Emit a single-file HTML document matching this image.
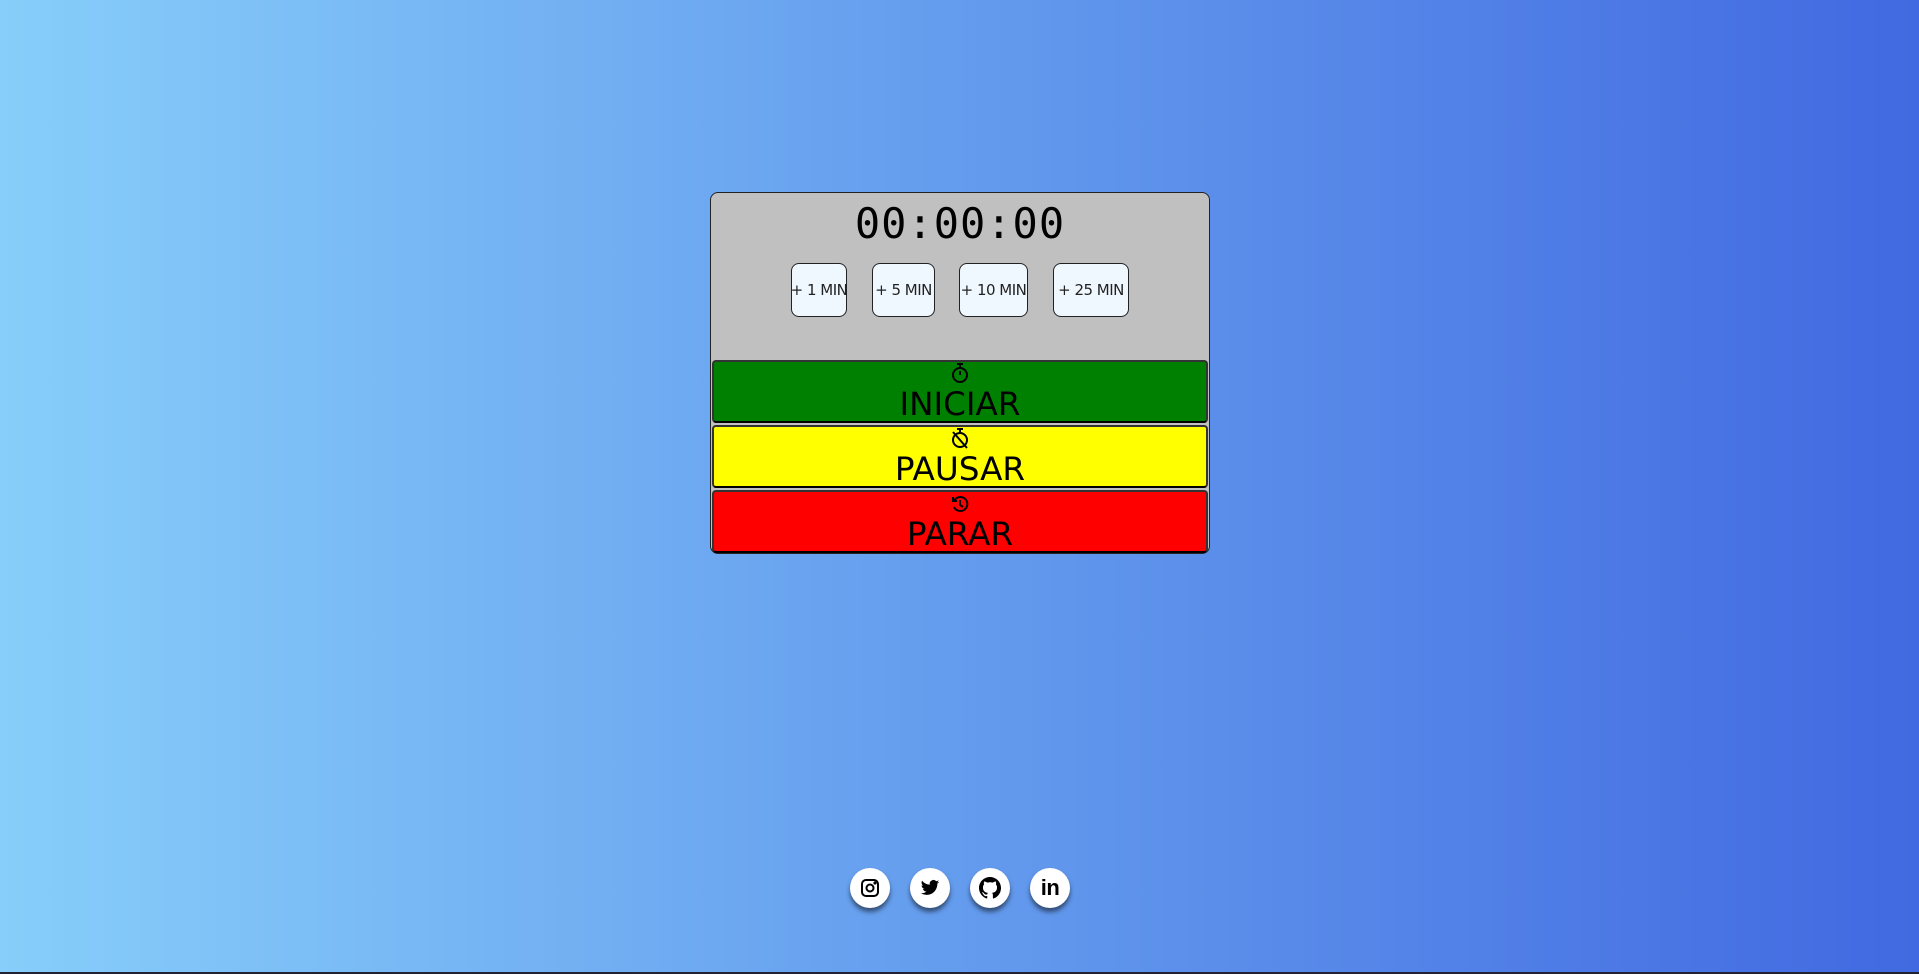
<!DOCTYPE html>
<html><head><meta charset="utf-8"><style>
*{box-sizing:border-box;margin:0;padding:0}
html,body{width:1919px;height:974px;overflow:hidden}
body{background:linear-gradient(to right,#87cefa,#4169e1);font-family:"DejaVu Sans","Liberation Sans",sans-serif;position:relative}
.card{position:absolute;left:710px;top:192px;width:500px;height:362px;background:#c0c0c0;border:1px solid #222;border-radius:8px}
.time{position:absolute;left:0;right:0;top:6px;text-align:center;font-size:42px;letter-spacing:1px;color:#000;font-family:"DejaVu Sans Mono","Liberation Mono",monospace}
.add{position:absolute;top:70px;height:54px;background:#f0f8ff;border:1px solid #222;border-radius:8px;font-size:15px;display:flex;align-items:center;justify-content:center;color:#222;white-space:nowrap;letter-spacing:-0.5px}
.act{position:absolute;left:1px;width:496px;height:63px;border:2px solid #333;border-radius:4px;text-align:center;border-bottom-color:#000}
.act svg{position:absolute;left:236px;top:0px}
.act span{position:absolute;left:0;right:0;top:25px;font-size:32px;line-height:34px;color:#000;letter-spacing:0px;transform:scaleX(1.02)}
.soc{position:absolute;top:868px;width:40px;height:40px;border-radius:50%;background:#fff;box-shadow:0 4px 5px rgba(0,0,0,.5);display:flex;align-items:center;justify-content:center}
.line{position:absolute;left:0;right:0;bottom:0;height:2px;background:#223}
</style></head><body>
<div class="card">
<div class="time">00:00:00</div>
<div class="add" style="left:80px;width:56px">+ 1 MIN</div>
<div class="add" style="left:161px;width:63px">+ 5 MIN</div>
<div class="add" style="left:248px;width:69px">+ 10 MIN</div>
<div class="add" style="left:342px;width:76px">+ 25 MIN</div>
<div class="act" style="top:167px;background:#008000"><svg width="20" height="22" viewBox="0 0 20 22" fill="none" stroke="#000" stroke-width="2"><path d="M7 2h6M10 2v3"/><circle cx="10" cy="13" r="7"/><path d="M10 9v4"/></svg><span>INICIAR</span></div>
<div class="act" style="top:232px;background:#ff0"><svg width="20" height="22" viewBox="0 0 20 22" fill="none" stroke="#000" stroke-width="2"><path d="M7 2h6M10 2v3"/><circle cx="10" cy="13" r="7"/><path d="M3 5l14 16"/></svg><span>PAUSAR</span></div>
<div class="act" style="top:297px;background:#f00"><svg width="20" height="22" viewBox="0 0 20 22" fill="none" stroke="#000" stroke-width="2"><path d="M4 9a7 7 0 1 1 0 6"/><path d="M3 5v4h4"/><path d="M10 8v5l3 2"/></svg><span>PARAR</span></div>
</div>
<div class="soc" style="left:850px"><svg width="20" height="20" viewBox="0 0 20 20" fill="none" stroke="#000" stroke-width="2"><rect x="2" y="2" width="16" height="16" rx="4"/><circle cx="10" cy="10" r="3.5"/><circle cx="15" cy="5" r=".6" fill="#000"/></svg></div>
<div class="soc" style="left:910px"><svg width="22" height="20" viewBox="0 0 24 24"><path fill="#000" d="M23 4.6c-.8.4-1.7.6-2.6.7.9-.6 1.6-1.4 2-2.5-.9.5-1.9.9-2.9 1.1A4.5 4.5 0 0 0 11.8 8 12.8 12.8 0 0 1 2.5 3.3a4.5 4.5 0 0 0 1.4 6c-.7 0-1.4-.2-2-.6 0 2.2 1.5 4 3.6 4.4-.7.2-1.4.2-2 .1.6 1.8 2.3 3.1 4.2 3.1A9 9 0 0 1 1 18.2 12.8 12.8 0 0 0 8 20.2c8.3 0 12.8-6.9 12.8-12.8v-.6c.9-.6 1.6-1.4 2.2-2.2z"/></svg></div>
<div class="soc" style="left:970px"><svg width="22" height="22" viewBox="0 0 16 16"><path fill="#000" d="M8 0C3.6 0 0 3.6 0 8c0 3.5 2.3 6.5 5.5 7.6.4.1.5-.2.5-.4v-1.4c-2.2.5-2.7-1-2.7-1-.4-.9-.9-1.2-.9-1.2-.7-.5.1-.5.1-.5.8.1 1.2.8 1.2.8.7 1.2 1.9.9 2.3.7.1-.5.3-.9.5-1.1-1.8-.2-3.6-.9-3.6-4 0-.9.3-1.6.8-2.1-.1-.2-.4-1 .1-2.1 0 0 .7-.2 2.2.8.6-.2 1.3-.3 2-.3s1.4.1 2 .3c1.5-1 2.2-.8 2.2-.8.4 1.1.2 1.9.1 2.1.5.6.8 1.3.8 2.1 0 3.1-1.9 3.8-3.6 4 .3.3.6.8.6 1.5v2.2c0 .2.1.5.6.4A8 8 0 0 0 16 8c0-4.4-3.6-8-8-8z"/></svg></div>
<div class="soc" style="left:1030px"><span style="font-family:'Liberation Sans',sans-serif;font-weight:bold;font-size:22px;color:#000;letter-spacing:-0.5px">in</span></div>
<div class="line"></div>
</body></html>
